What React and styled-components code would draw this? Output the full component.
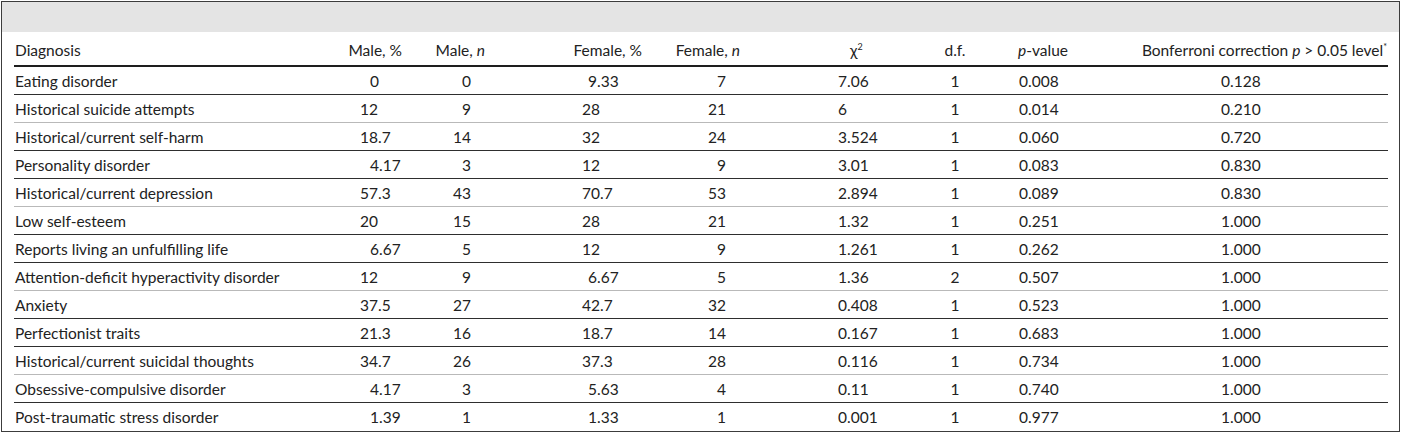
import React from "react";
import styled, { createGlobalStyle } from "styled-components";

const GlobalStyle = createGlobalStyle`
  body {
    margin: 0;
    background: #ffffff;
  }
`;

// column layout: width, header alignment/padding, value alignment/padding
const columns = [
  { w: 316, hAlign: "left", hPad: "3px 0 0 1px", vAlign: "left", vPad: "0 0 0 1px" },
  { w: 90, hAlign: "right", hPad: "3px 18px 0 0", vAlign: "left", vPad: "0 0 0 30px" },
  { w: 80, hAlign: "right", hPad: "3px 15px 0 0", vAlign: "right", vPad: "0 29px 0 0" },
  { w: 160, hAlign: "right", hPad: "3px 18px 0 0", vAlign: "left", vPad: "0 0 0 82px" },
  { w: 100, hAlign: "right", hPad: "3px 20px 0 0", vAlign: "right", vPad: "0 34px 0 0" },
  { w: 150, hAlign: "left", hPad: "3px 0 0 90px", vAlign: "left", vPad: "0 0 0 78px" },
  { w: 90, hAlign: "center", hPad: "3px 0 0 0", vAlign: "center", vPad: "0" },
  { w: 100, hAlign: "left", hPad: "3px 0 0 18px", vAlign: "left", vPad: "0 0 0 19px" },
  { w: 288, hAlign: "right", hPad: "3px 1px 0 0", vAlign: "left", vPad: "0 0 0 121px" },
];

const rows = [
  ["Eating disorder", "0", "0", "9.33", "7", "7.06", "1", "0.008", "0.128"],
  ["Historical suicide attempts", "12", "9", "28", "21", "6", "1", "0.014", "0.210"],
  ["Historical/current self-harm", "18.7", "14", "32", "24", "3.524", "1", "0.060", "0.720"],
  ["Personality disorder", "4.17", "3", "12", "9", "3.01", "1", "0.083", "0.830"],
  ["Historical/current depression", "57.3", "43", "70.7", "53", "2.894", "1", "0.089", "0.830"],
  ["Low self-esteem", "20", "15", "28", "21", "1.32", "1", "0.251", "1.000"],
  ["Reports living an unfulfilling life", "6.67", "5", "12", "9", "1.261", "1", "0.262", "1.000"],
  ["Attention-deficit hyperactivity disorder", "12", "9", "6.67", "5", "1.36", "2", "0.507", "1.000"],
  ["Anxiety", "37.5", "27", "42.7", "32", "0.408", "1", "0.523", "1.000"],
  ["Perfectionist traits", "21.3", "16", "18.7", "14", "0.167", "1", "0.683", "1.000"],
  ["Historical/current suicidal thoughts", "34.7", "26", "37.3", "28", "0.116", "1", "0.734", "1.000"],
  ["Obsessive-compulsive disorder", "4.17", "3", "5.63", "4", "0.11", "1", "0.740", "1.000"],
  ["Post-traumatic stress disorder", "1.39", "1", "1.33", "1", "0.001", "1", "0.977", "1.000"],
];

// rule under each row: the scan shows a repeating dark, light, dark pattern
const ruleTone = (i) => (i % 3 === 1 ? "light" : "dark");

// percent columns with a one-digit integer part are pushed over by a digit
const indentFor = (col, value) => {
  if (!/^\d(\.|$)/.test(value)) return 0;
  if (col === 1) return 10;
  if (col === 3) return 6;
  return 0;
};

const Frame = styled.div`
  margin: 1px 0 0 1px;
  width: 1399px;
  box-sizing: border-box;
  border: 1px solid #3c3c3c;
  background: #ffffff;
  font-family: Lato, "Open Sans", "Liberation Sans", sans-serif;
  font-size: 15.5px;
  color: #222222;
`;

const Caption = styled.div`
  height: 30px;
  background: #e4e4e4;
`;

const Body = styled.div`
  padding: 0 11px 0 12px;
`;

const Table = styled.table`
  width: 1374px;
  table-layout: fixed;
  border-collapse: collapse;
`;

const HeadCell = styled.th`
  height: 30px;
  padding: ${(p) => p.$pad};
  text-align: ${(p) => p.$align};
  font-weight: 400;
  white-space: nowrap;
  border-bottom: 2px solid #1e1e1e;
  vertical-align: middle;
`;

const Row = styled.tr`
  border-bottom: ${(p) =>
    p.$last ? "none" : p.$tone === "light" ? "1px solid #b9b9b9" : "1px solid #2e2e2e"};
`;

const Cell = styled.td`
  height: ${(p) => (p.$last ? "28px" : "27px")};
  padding: ${(p) => p.$pad};
  text-align: ${(p) => p.$align};
  white-space: nowrap;
  vertical-align: middle;
`;

const Value = styled.span`
  padding-left: ${(p) => p.$indent}px;
`;

const Sup = styled.sup`
  font-size: 9px;
  line-height: 0;
  vertical-align: 6px;
`;

const headers = [
  "Diagnosis",
  "Male, %",
  <>
    Male, <i>n</i>
  </>,
  "Female, %",
  <>
    Female, <i>n</i>
  </>,
  <>
    χ<Sup>2</Sup>
  </>,
  "d.f.",
  <>
    <i>p</i>-value
  </>,
  <>
    Bonferroni correction <i>p</i> &gt; 0.05 level<Sup>*</Sup>
  </>,
];

export default function App() {
  return (
    <>
      <GlobalStyle />
      <Frame>
        <Caption />
        <Body>
          <Table>
            <colgroup>
              {columns.map((c, i) => (
                <col key={i} style={{ width: c.w }} />
              ))}
            </colgroup>
            <thead>
              <tr>
                {headers.map((h, i) => (
                  <HeadCell key={i} $align={columns[i].hAlign} $pad={columns[i].hPad}>
                    {h}
                  </HeadCell>
                ))}
              </tr>
            </thead>
            <tbody>
              {rows.map((r, ri) => {
                const last = ri === rows.length - 1;
                return (
                  <Row key={ri} $tone={ruleTone(ri)} $last={last}>
                    {r.map((v, ci) => (
                      <Cell
                        key={ci}
                        $last={last}
                        $align={columns[ci].vAlign}
                        $pad={columns[ci].vPad}
                      >
                        <Value $indent={indentFor(ci, v)}>{v}</Value>
                      </Cell>
                    ))}
                  </Row>
                );
              })}
            </tbody>
          </Table>
        </Body>
      </Frame>
    </>
  );
}
